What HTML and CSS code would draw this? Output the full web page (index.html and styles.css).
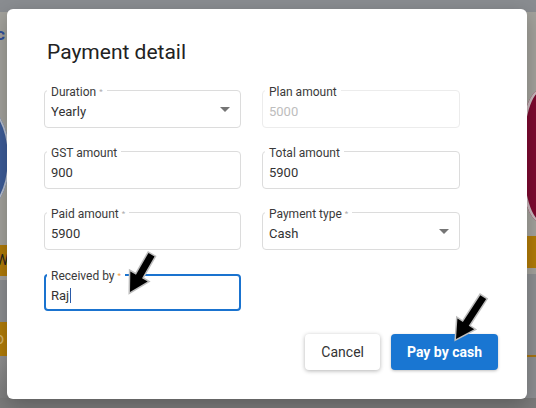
FILE: index.html
```html
<!DOCTYPE html>
<html>
<head>
<meta charset="utf-8">
<link rel="stylesheet" href="styles.css">
</head>
<body>
<div class="backdrop">
  <div class="bd bd-top"></div>
  <div class="bd bd-left"></div>
  <div class="bd bd-left-c">c</div>
  <div class="bd bd-left-circle"></div>
  <div class="bd bd-left-orange">W</div>
  <div class="bd bd-left-gray"></div>
  <div class="bd bd-left-orange2">o</div>
  <div class="bd bd-left-bottom"></div>
  <div class="bd bd-right"></div>
  <div class="bd bd-right-shape"></div>
  <div class="bd bd-right-orange"></div>
  <div class="bd bd-right-gray"></div>
  <div class="bd bd-right-line"></div>
  <div class="bd bd-bottom"></div>
</div>

<div class="dialog">
  <h1 class="title">Payment detail</h1>
  <div class="fields">
    <div class="field">
      <span class="label">Duration<span class="req">*</span></span>
      <span class="value">Yearly</span>
      <span class="caret"></span>
    </div>
    <div class="field disabled">
      <span class="label">Plan amount</span>
      <span class="value">5000</span>
    </div>
    <div class="field">
      <span class="label">GST amount</span>
      <span class="value">900</span>
    </div>
    <div class="field">
      <span class="label">Total amount</span>
      <span class="value">5900</span>
    </div>
    <div class="field">
      <span class="label">Paid amount<span class="req">*</span></span>
      <span class="value">5900</span>
    </div>
    <div class="field">
      <span class="label">Payment type<span class="req">*</span></span>
      <span class="value">Cash</span>
      <span class="caret"></span>
    </div>
    <div class="field focused">
      <span class="label">Received by<span class="req">*</span></span>
      <span class="value">Raj<span class="cursor"></span></span>
    </div>
  </div>
  <div class="actions">
    <button class="btn btn-cancel">Cancel</button>
    <button class="btn btn-primary">Pay by cash</button>
  </div>
</div>

<svg class="arrows" width="536" height="408" viewBox="0 0 536 408">
  <polygon transform="translate(130 292) rotate(30)" points="0,0 -10,-18 -3.5,-18 -3.5,-43 3.5,-43 3.5,-18 10,-18"/>
  <polygon transform="translate(456 339) rotate(33)" points="0,0 -10,-18 -3.5,-18 -3.5,-50 3.5,-50 3.5,-18 10,-18"/>
</svg>
</body>
</html>
```
FILE: styles.css
```css
html, body {
  margin: 0;
  padding: 0;
}
body {
  width: 536px;
  height: 408px;
  overflow: hidden;
  position: relative;
  background: #8b8d90;
  font-family: Roboto, "Liberation Sans", Arial, sans-serif;
}

/* dimmed page behind the modal */
.backdrop {
  position: absolute;
  inset: 0;
  overflow: hidden;
}
.bd { position: absolute; }
.bd-top { left: 0; top: 0; width: 536px; height: 12px; background: #8a8d91; }
.bd-left { left: 0; top: 12px; width: 12px; height: 268px; background: #a3a29c; }
.bd-left-c { left: -4px; top: 24px; font: bold 17px Roboto, sans-serif; color: #2e4e9c; }
.bd-left-circle { left: -60px; top: 100px; width: 70px; height: 116px; border-radius: 50%; background: #3d5c98; box-shadow: inset -2px 0 0 #b9c0cf; }
.bd-left-orange { left: 0; top: 245px; width: 12px; height: 31px; background: #b07b07; color: #222; font: 14px Roboto, sans-serif; line-height: 31px; text-indent: -4px; }
.bd-left-gray { left: 0; top: 280px; width: 12px; height: 42px; background: #8c8e91; }
.bd-left-orange2 { left: 0; top: 322px; width: 12px; height: 34px; background: #b27d08; color: #d6b46b; font: 16px Roboto, sans-serif; line-height: 34px; text-indent: -5px; }
.bd-left-bottom { left: 0; top: 356px; width: 12px; height: 52px; background: linear-gradient(#919191, #7a7a7a); }
.bd-right { left: 524px; top: 12px; width: 12px; height: 262px; background: #a3a29c; }
.bd-right-shape { left: 520px; top: 90px; width: 40px; height: 132px; border-radius: 50%; background: #7e0a30; box-shadow: inset 3px 0 0 #c9b9bd; }
.bd-right-orange { left: 524px; top: 236px; width: 12px; height: 32px; background: #b27c07; }
.bd-right-gray { left: 524px; top: 274px; width: 12px; height: 134px; background: #8d8f92; }
.bd-right-line { left: 524px; top: 355px; width: 12px; height: 2px; background: #a67514; }
.bd-bottom { left: 0; top: 398px; width: 536px; height: 10px; background: #7b7b7b; }

/* modal */
.dialog {
  position: absolute;
  left: 7px;
  top: 9px;
  width: 520px;
  height: 390px;
  box-sizing: border-box;
  padding: 29px 29px 29px 37px;
  background: #fff;
  border-radius: 6px;
  box-shadow: 0 6px 20px rgba(0,0,0,0.25);
  display: flex;
  flex-direction: column;
}
.title {
  margin: 0 0 24px 3px;
  font-size: 21px;
  line-height: 28px;
  font-weight: 400;
  color: #222;
}
.fields {
  display: grid;
  grid-template-columns: 197px 198px;
  grid-template-rows: 38px 38px 38px 38px;
  column-gap: 21px;
  row-gap: 23px;
}
.field {
  position: relative;
  box-sizing: border-box;
  border: 1px solid #dcdcdc;
  border-radius: 4px;
  padding: 12px 6px 6px 6px;
}
.field.focused { margin-top: 1px; }
.field.disabled { border-color: #ececec; }
.field.focused {
  border: 2px solid #1a73cf;
  padding: 11px 5px 5px 5px;
}
.label {
  position: absolute;
  left: 2px;
  top: -6px;
  padding: 0 4px;
  background: #fff;
  font-size: 12px;
  line-height: 14px;
  color: #3a3a3a;
  white-space: nowrap;
}
.focused .label { left: 1px; top: -7px; }
.req {
  font-size: 8px;
  color: #aaa;
  margin-left: 3px;
  vertical-align: 2px;
}
.focused .req { color: #f39a3a; }
.value {
  display: block;
  font-size: 13px;
  line-height: 18px;
  color: #333;
}
.disabled .value { color: #bdbdbd; }
.cursor {
  display: inline-block;
  width: 1px;
  height: 15px;
  background: #2a5aa8;
  vertical-align: -3px;
  margin-left: 1px;
}
.caret {
  position: absolute;
  right: 10px;
  top: 16px;
  width: 0;
  height: 0;
  border-left: 5px solid transparent;
  border-right: 5px solid transparent;
  border-top: 5px solid #757575;
}
.actions {
  margin-top: auto;
  display: flex;
  justify-content: flex-end;
  gap: 11px;
}
.btn {
  height: 36px;
  border: none;
  border-radius: 4px;
  font-family: Roboto, "Liberation Sans", Arial, sans-serif;
  font-size: 14px;
  padding: 0 16px;
  cursor: pointer;
}
.btn-cancel {
  background: #fff;
  color: #333;
  font-weight: 400;
  padding: 0 16px;
  box-shadow: 0 1px 4px rgba(0,0,0,0.3);
}
.btn-primary {
  background: #1976d2;
  color: #fff;
  font-weight: 700;
  box-shadow: 0 1px 3px rgba(0,0,0,0.25);
}

/* annotation arrows */
.arrows {
  position: absolute;
  left: 0;
  top: 0;
  pointer-events: none;
}
.arrows polygon {
  fill: #000;
  stroke: #bdbdbd;
  stroke-width: 3;
  stroke-linejoin: miter;
  paint-order: stroke;
}
```
